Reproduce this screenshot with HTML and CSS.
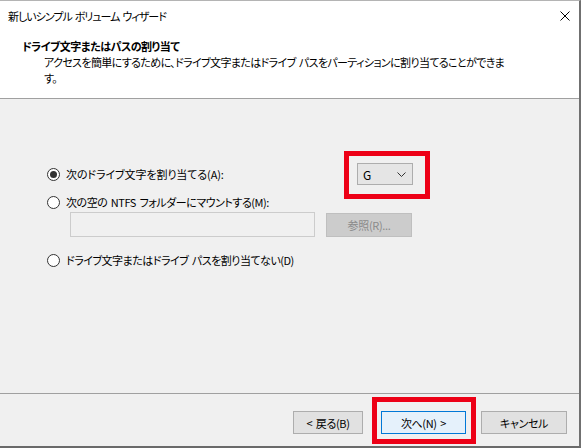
FILE: index.html
```html
<!DOCTYPE html>
<html lang="ja">
<head>
<meta charset="utf-8">
<title>新しいシンプル ボリューム ウィザード</title>
<link rel="stylesheet" href="styles.css">
</head>
<body>
<div class="window">
  <div class="titlebar">
    <span class="title">新しいシンプル ボリューム ウィザード</span>
    <svg class="close" width="10" height="10" viewBox="0 0 10 10"><path d="M0.5 0.5 L9.5 9.5 M9.5 0.5 L0.5 9.5" stroke="#000" stroke-width="1" fill="none"/></svg>
  </div>
  <div class="header">
    <div class="h-title">ドライブ文字またはパスの割り当て</div>
    <div class="h-sub">アクセスを簡単にするために、ドライブ文字またはドライブ パスをパーティションに割り当てることができま<br>す。</div>
  </div>
  <div class="content">
    <div class="row row-first">
      <label class="radio ls-a"><span class="dot checked"></span>次のドライブ文字を割り当てる(A):</label>
      <div class="combo-wrap">
        <div class="combo"><span>G</span><svg width="9" height="5" viewBox="0 0 9 5"><path d="M0.5 0.5 L4.5 4.5 L8.5 0.5" stroke="#333" stroke-width="1" fill="none"/></svg></div>
        <div class="highlight hl-combo"></div>
      </div>
    </div>
    <div class="row">
      <label class="radio ls-m"><span class="dot"></span>次の空の NTFS フォルダーにマウントする(M):</label>
    </div>
    <div class="path-row">
      <div class="input"></div>
      <div class="btn disabled">参照(R)...</div>
    </div>
    <div class="row row-last">
      <label class="radio ls-d"><span class="dot"></span>ドライブ文字またはドライブ パスを割り当てない(D)</label>
    </div>
  </div>
  <div class="footer">
    <div class="btn back">&lt; 戻る(B)</div>
    <div class="next-wrap">
      <div class="btn primary">次へ(N) &gt;</div>
      <div class="highlight hl-next"></div>
    </div>
    <div class="btn cancel">キャンセル</div>
  </div>
</div>
</body>
</html>
```

FILE: styles.css
```css
* { box-sizing: border-box; }
html, body { margin: 0; padding: 0; }
body {
  font-family: "Noto Sans CJK JP", "Noto Sans", sans-serif;
  font-size: 11px;
  font-feature-settings: "palt";
  letter-spacing: -0.35px;
  word-spacing: 1.5px;
  color: #000;
  background: #fff;
}
.window {
  width: 581px;
  height: 448px;
  border-top: 1px solid #b4b4b4;
  border-right: 2px solid #707070;
  border-bottom: 2px solid #6a6a6a;
  display: flex;
  flex-direction: column;
  background: #f0f0f0;
}
.titlebar {
  height: 29px;
  flex: none;
  background: #fff;
  display: flex;
  align-items: center;
  justify-content: space-between;
  padding: 0 9px 0 8px;
  line-height: 16px;
}
.title { letter-spacing: -1.0px; }
.close { display: block; }
.header {
  height: 69px;
  flex: none;
  background: #fff;
  border-bottom: 1px solid #a0a0a0;
  padding: 8px 0 0 22px;
}
.h-title {
  font-weight: bold;
  line-height: 16px;
  letter-spacing: -0.5px;
}
.h-sub {
  padding-left: 22px;
  line-height: 16px;
  letter-spacing: -0.63px;
}
.content {
  flex: 1;
  padding: 64px 0 0 47px;
}
.row {
  height: 20px;
  display: flex;
  align-items: center;
}
.row-first {
  display: grid;
  grid-template-columns: 310px auto;
  align-items: center;
  margin-bottom: 9px;
}
.row-last { margin-top: 13px; }
.radio {
  display: flex;
  align-items: center;
  gap: 6px;
  white-space: nowrap;
  line-height: 16px;
}
.ls-a { letter-spacing: -0.1px; }
.ls-m { letter-spacing: -0.46px; }
.ls-d { letter-spacing: -0.49px; }
.dot {
  width: 13px;
  height: 13px;
  border: 1px solid #333;
  border-radius: 50%;
  background: #fff;
  display: flex;
  align-items: center;
  justify-content: center;
  flex: none;
}
.dot.checked::after {
  content: "";
  width: 7px;
  height: 7px;
  border-radius: 50%;
  background: #333;
}
.combo-wrap { position: relative; width: 56px; }
.combo {
  width: 56px;
  height: 22px;
  background: #e5e5e5;
  border: 1px solid #adadad;
  display: flex;
  align-items: center;
  justify-content: space-between;
  padding: 0 6px 0 5px;
  font-size: 12px;
  letter-spacing: 0;
}
.combo svg { display: block; }
.highlight {
  position: absolute;
  border: 5px solid #ed0016;
  pointer-events: none;
}
.hl-combo { left: -13px; right: -17px; top: -12px; bottom: -14px; }
.path-row {
  display: flex;
  align-items: center;
  gap: 11px;
  margin-left: 23px;
  height: 25px;
}
.input {
  width: 245px;
  height: 25px;
  background: #f0f0f0;
  border: 1px solid #cccccc;
}
.btn {
  height: 23px;
  display: flex;
  align-items: center;
  justify-content: center;
  background: #e1e1e1;
  border: 1px solid #adadad;
  white-space: nowrap;
  line-height: 16px;
}
.btn.disabled {
  width: 86px;
  height: 24px;
  background: #cccccc;
  border-color: #bfbfbf;
  color: #8a8a8a;
}
.footer {
  height: 53px;
  flex: none;
  border-top: 1px solid #a0a0a0;
  display: flex;
  justify-content: flex-end;
  align-items: flex-start;
  padding: 17px 12px 0 0;
}
.back { width: 70px; margin-right: 18px; }
.next-wrap { position: relative; width: 85px; margin-right: 15px; }
.primary {
  width: 85px;
  background: #e5f1fb;
  border-color: #0078d7;
}
.hl-next { left: -9px; right: -10px; top: -14px; bottom: -10px; }
.cancel { width: 86px; }
```
